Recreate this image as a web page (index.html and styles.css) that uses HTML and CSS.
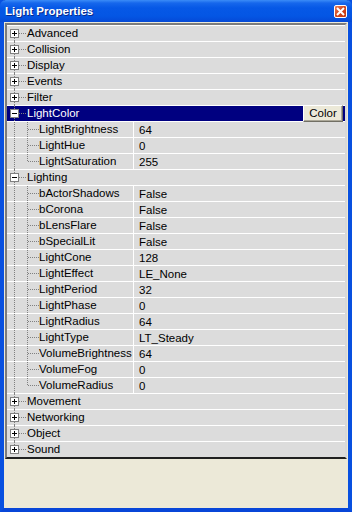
FILE: index.html
```html
<!DOCTYPE html>
<html lang="en">
  <head>
    <meta charset="utf-8">
    <title>Light Properties</title>
    <link rel="stylesheet" href="styles.css">
  </head>

  <body>
    <div class="window">
      <div class="titlebar">
        <span class="title">Light Properties</span>
        <span class="close">
          <svg width="9" height="9" viewBox="0 0 9 9"><path d="M1 1L8 8M8 1L1 8" stroke="#fff" stroke-width="2"/></svg>
        </span>
      </div>

      <div class="content">
        <div class="grid">
          <div class="row top first">
            <span class="twig"><svg class="box" width="9" height="9"><rect x=".5" y=".5" width="8" height="8" fill="#fff" stroke="#808080"/><path d="M2 4.5h5M4.5 2v5" stroke="#000"/></svg></span>
            <span class="label">Advanced</span>
          </div>
          <div class="row top">
            <span class="twig"><svg class="box" width="9" height="9"><rect x=".5" y=".5" width="8" height="8" fill="#fff" stroke="#808080"/><path d="M2 4.5h5M4.5 2v5" stroke="#000"/></svg></span>
            <span class="label">Collision</span>
          </div>
          <div class="row top">
            <span class="twig"><svg class="box" width="9" height="9"><rect x=".5" y=".5" width="8" height="8" fill="#fff" stroke="#808080"/><path d="M2 4.5h5M4.5 2v5" stroke="#000"/></svg></span>
            <span class="label">Display</span>
          </div>
          <div class="row top">
            <span class="twig"><svg class="box" width="9" height="9"><rect x=".5" y=".5" width="8" height="8" fill="#fff" stroke="#808080"/><path d="M2 4.5h5M4.5 2v5" stroke="#000"/></svg></span>
            <span class="label">Events</span>
          </div>
          <div class="row top">
            <span class="twig"><svg class="box" width="9" height="9"><rect x=".5" y=".5" width="8" height="8" fill="#fff" stroke="#808080"/><path d="M2 4.5h5M4.5 2v5" stroke="#000"/></svg></span>
            <span class="label">Filter</span>
          </div>

          <div class="row top selected">
            <span class="twig"><svg class="box" width="9" height="9"><rect x=".5" y=".5" width="8" height="8" fill="#fff" stroke="#808080"/><path d="M2 4.5h5" stroke="#000"/></svg></span>
            <span class="label">LightColor</span>
            <button class="btn">Color</button>
          </div>
          <div class="row child">
            <span class="key"><span class="pass"></span><span class="leaf"></span><span class="label">LightBrightness</span></span>
            <span class="val">64</span>
          </div>
          <div class="row child">
            <span class="key"><span class="pass"></span><span class="leaf"></span><span class="label">LightHue</span></span>
            <span class="val">0</span>
          </div>
          <div class="row child">
            <span class="key"><span class="pass"></span><span class="leaf last"></span><span class="label">LightSaturation</span></span>
            <span class="val">255</span>
          </div>

          <div class="row top">
            <span class="twig"><svg class="box" width="9" height="9"><rect x=".5" y=".5" width="8" height="8" fill="#fff" stroke="#808080"/><path d="M2 4.5h5" stroke="#000"/></svg></span>
            <span class="label">Lighting</span>
          </div>
          <div class="row child">
            <span class="key"><span class="pass"></span><span class="leaf"></span><span class="label">bActorShadows</span></span>
            <span class="val">False</span>
          </div>
          <div class="row child">
            <span class="key"><span class="pass"></span><span class="leaf"></span><span class="label">bCorona</span></span>
            <span class="val">False</span>
          </div>
          <div class="row child">
            <span class="key"><span class="pass"></span><span class="leaf"></span><span class="label">bLensFlare</span></span>
            <span class="val">False</span>
          </div>
          <div class="row child">
            <span class="key"><span class="pass"></span><span class="leaf"></span><span class="label">bSpecialLit</span></span>
            <span class="val">False</span>
          </div>
          <div class="row child">
            <span class="key"><span class="pass"></span><span class="leaf"></span><span class="label">LightCone</span></span>
            <span class="val">128</span>
          </div>
          <div class="row child">
            <span class="key"><span class="pass"></span><span class="leaf"></span><span class="label">LightEffect</span></span>
            <span class="val">LE_None</span>
          </div>
          <div class="row child">
            <span class="key"><span class="pass"></span><span class="leaf"></span><span class="label">LightPeriod</span></span>
            <span class="val">32</span>
          </div>
          <div class="row child">
            <span class="key"><span class="pass"></span><span class="leaf"></span><span class="label">LightPhase</span></span>
            <span class="val">0</span>
          </div>
          <div class="row child">
            <span class="key"><span class="pass"></span><span class="leaf"></span><span class="label">LightRadius</span></span>
            <span class="val">64</span>
          </div>
          <div class="row child">
            <span class="key"><span class="pass"></span><span class="leaf"></span><span class="label">LightType</span></span>
            <span class="val">LT_Steady</span>
          </div>
          <div class="row child">
            <span class="key"><span class="pass"></span><span class="leaf"></span><span class="label">VolumeBrightness</span></span>
            <span class="val">64</span>
          </div>
          <div class="row child">
            <span class="key"><span class="pass"></span><span class="leaf"></span><span class="label">VolumeFog</span></span>
            <span class="val">0</span>
          </div>
          <div class="row child">
            <span class="key"><span class="pass"></span><span class="leaf last"></span><span class="label">VolumeRadius</span></span>
            <span class="val">0</span>
          </div>

          <div class="row top">
            <span class="twig"><svg class="box" width="9" height="9"><rect x=".5" y=".5" width="8" height="8" fill="#fff" stroke="#808080"/><path d="M2 4.5h5M4.5 2v5" stroke="#000"/></svg></span>
            <span class="label">Movement</span>
          </div>
          <div class="row top">
            <span class="twig"><svg class="box" width="9" height="9"><rect x=".5" y=".5" width="8" height="8" fill="#fff" stroke="#808080"/><path d="M2 4.5h5M4.5 2v5" stroke="#000"/></svg></span>
            <span class="label">Networking</span>
          </div>
          <div class="row top">
            <span class="twig"><svg class="box" width="9" height="9"><rect x=".5" y=".5" width="8" height="8" fill="#fff" stroke="#808080"/><path d="M2 4.5h5M4.5 2v5" stroke="#000"/></svg></span>
            <span class="label">Object</span>
          </div>
          <div class="row top last">
            <span class="twig"><svg class="box" width="9" height="9"><rect x=".5" y=".5" width="8" height="8" fill="#fff" stroke="#808080"/><path d="M2 4.5h5M4.5 2v5" stroke="#000"/></svg></span>
            <span class="label">Sound</span>
          </div>
        </div>
      </div>
    </div>
  </body>
</html>
```

FILE: styles.css
```css
body {
  margin: 0;
  font-family: "Liberation Sans", Arial, sans-serif;
  font-size: 11.5px;
}

.window {
  width: 352px;
  height: 512px;
  box-sizing: border-box;
  display: flex;
  flex-direction: column;
  background: #0054e3;
  border-left: 4px solid #0850e0;
  border-right: 4px solid #0850e0;
  border-bottom: 4px solid #0846d8;
  box-shadow: inset 1px 0 #0a30a8, inset -1px 0 #001ea0;
}

.titlebar {
  height: 22px;
  margin: 0 -4px;
  padding: 0 5px;
  display: flex;
  align-items: center;
  background: linear-gradient(#3b8cf7 0, #1667ec 3px, #0658e6 8px, #0456e4 16px, #0549d6 22px);
  border-radius: 6px 6px 0 0;
}

.title {
  flex: 1;
  color: #fff;
  font-weight: bold;
  font-size: 11.5px;
  text-shadow: 1px 1px #0a2a8a;
}

.close {
  width: 13px;
  height: 13px;
  box-sizing: border-box;
  display: flex;
  align-items: center;
  justify-content: center;
  background: linear-gradient(135deg, #e8805a, #d2461e 50%, #c03810);
  border: 1px solid #fff;
  border-radius: 2px;
}

.content {
  flex: 1;
  background: #ece9d8;
  padding: 1px 1px 0;
}

.grid {
  border-style: solid;
  border-width: 2px;
  border-color: #7c7c7c #d8d8d8 #202020 #7c7c7c;
  background: #dcdcdc;
}

.row {
  height: 15px;
  border-top: 1px solid #fff;
  display: flex;
  align-items: center;
  background: #dcdcdc;
  color: #000;
}

.label {
  white-space: nowrap;
  line-height: 15px;
}

.twig, .pass, .leaf {
  position: relative;
  align-self: stretch;
  flex: none;
}

.twig { width: 20px; }
.pass { width: 13px; }
.leaf { width: 19px; }

.twig::before, .pass::before, .leaf::before {
  content: "";
  position: absolute;
  left: 7px;
  top: -1px;
  bottom: 0;
  border-left: 1px dotted #808080;
}

.twig::after, .leaf::after {
  content: "";
  position: absolute;
  left: 8px;
  top: 7px;
  border-top: 1px dotted #808080;
}

.twig::after { width: 11px; }
.leaf::after { width: 11px; }

.top.first .twig::before { top: 7px; }
.top.last .twig::before { bottom: 8px; }
.leaf.last::before { bottom: 8px; }

.box {
  position: absolute;
  left: 3px;
  top: 3px;
  z-index: 1;
  display: block;
}

.key {
  width: 126px;
  flex: none;
  align-self: stretch;
  display: flex;
  align-items: center;
  border-right: 1px solid #fff;
  overflow: hidden;
}

.val {
  padding-left: 5px;
  white-space: nowrap;
}

.selected {
  background: #000080;
  color: #fff;
}

.btn {
  margin: -2px 2px -1px auto;
  width: 40px;
  height: 17px;
  padding: 0 0 1px;
  font-family: "Liberation Sans", Arial, sans-serif;
  font-size: 11.5px;
  color: #000;
  background: #ece9d8;
  border: 1px solid;
  border-color: #fff #716f64 #716f64 #fff;
  box-shadow: inset -1px -1px #aca899;
}
```
